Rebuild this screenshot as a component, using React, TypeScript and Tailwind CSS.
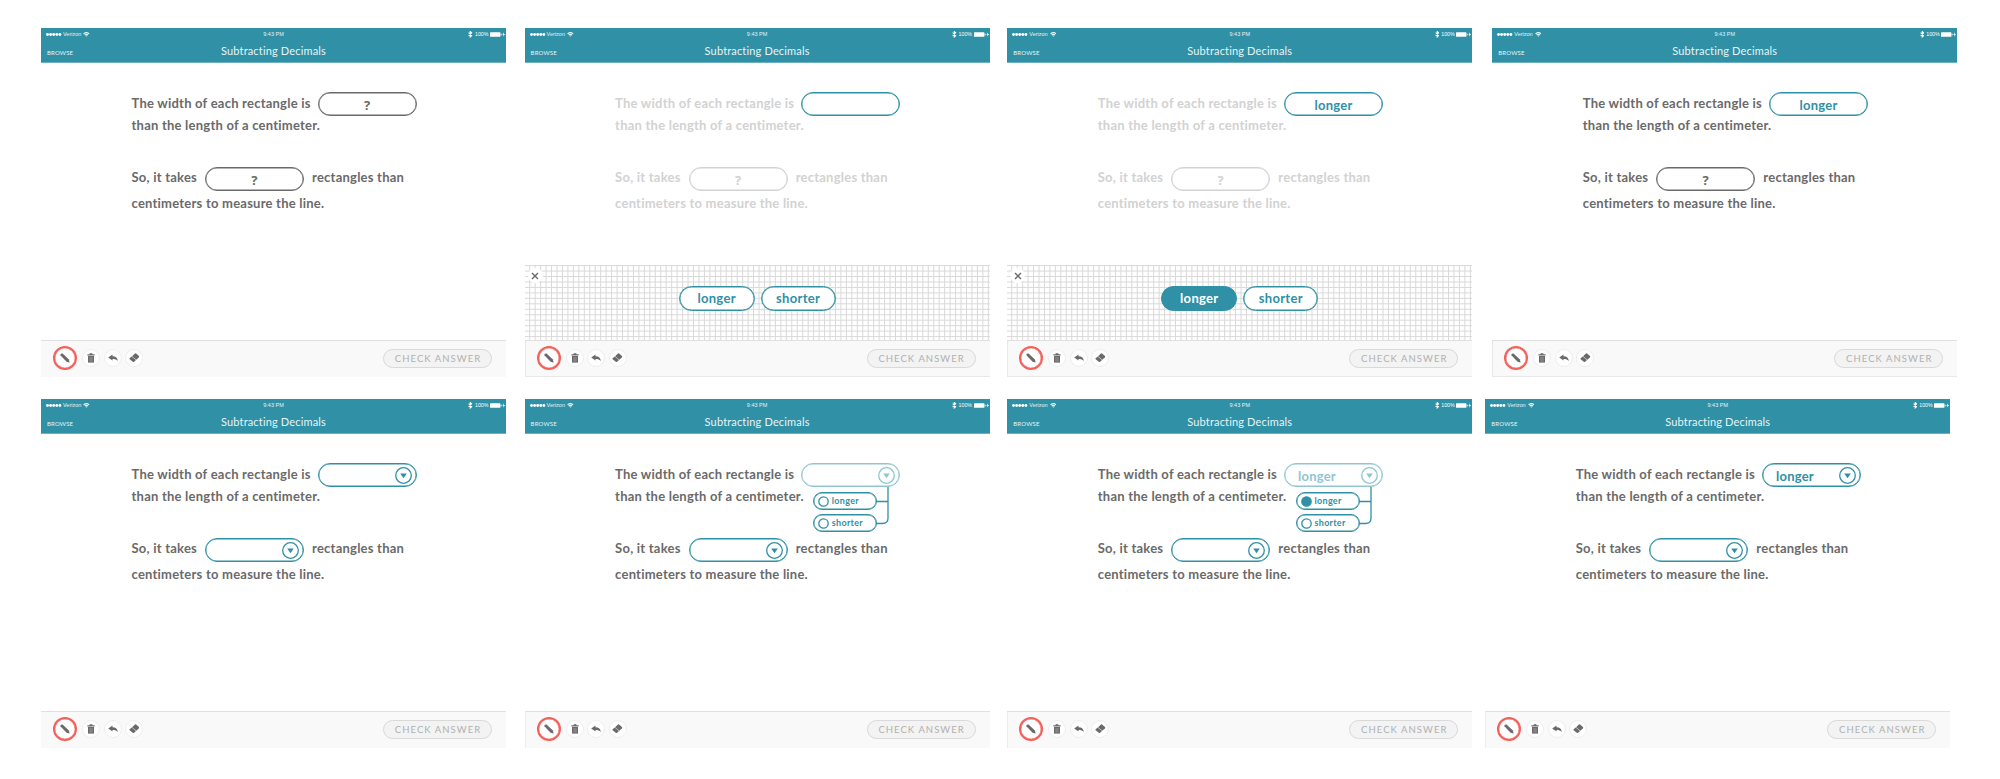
import type { ReactNode } from "react";

type Tone = "dark" | "faded" | "teal" | "tealLight";

const toneText: Record<Tone, string> = {
  dark: "text-[#6a6a6a]",
  faded: "text-[#d2d2d2]",
  teal: "text-[#3090a5]",
  tealLight: "text-[#90c6d2]",
};

/* ---------- status bar and header ---------- */

function WifiIcon() {
  return (
    <svg viewBox="0 0 12 9" className="h-[5px] w-[6.7px]" fill="none" stroke="currentColor">
      <path d="M1 3.2C4 .6 8 .6 11 3.2" strokeWidth="2.1" />
      <path d="M3 5.4C5 3.8 7 3.8 9 5.4" strokeWidth="1.9" />
      <path d="M6 8.6 4.4 6.8Q6 5.6 7.6 6.8Z" fill="currentColor" stroke="none" />
    </svg>
  );
}

function BluetoothIcon() {
  return (
    <svg viewBox="0 0 8 12" className="h-[6.5px] w-[4.5px]" fill="none" stroke="currentColor" strokeWidth="2">
      <path d="M1 3.2 6.6 8.6 4 11V1l2.6 2.4L1 8.8" />
    </svg>
  );
}

function BatteryIcon() {
  return (
    <svg viewBox="0 0 15 5" className="h-[5px] w-[15px]" fill="currentColor">
      <rect x="0" y="0.2" width="10.4" height="4.6" rx="0.6" />
      <rect x="10.6" y="1.6" width="1" height="1.8" rx="0.4" />
      <path d="M13.9 .3 12.4 2.8h1.1L13.2 4.7 15 2.1h-1.2z" />
    </svg>
  );
}

function Header() {
  return (
    <header className="h-[35px] border-b border-[#6bafc0] bg-[#3090a5] text-[#e6f4f7]">
      <div className="grid h-3 grid-cols-3 items-center pt-px font-['Liberation_Sans',sans-serif] text-[5.5px] leading-[11px]">
        <div className="flex items-center pl-[5px]">
          <svg viewBox="0 0 16 3" className="h-[3px] w-[16px] text-white" fill="currentColor">
            {[1.5, 4.6, 7.7, 10.8, 13.9].map((x) => (
              <circle key={x} cx={x} cy="1.5" r="1.45" />
            ))}
          </svg>
          <span className="ml-[1px]">Verizon</span>
          <span className="ml-[2px]">
            <WifiIcon />
          </span>
        </div>
        <span className="text-center">9:43 PM</span>
        <div className="flex items-center justify-end pr-[1px] text-white">
          <BluetoothIcon />
          <span className="mr-[1.5px] ml-[2px] text-[5.3px]">100%</span>
          <BatteryIcon />
        </div>
      </div>
      <div className="grid grid-cols-3 items-baseline leading-[22px]">
        <span className="pl-[6px] text-[6px] tracking-[0.17px]">BROWSE</span>
        <h1 className="text-center text-[11px] tracking-[0.16px] whitespace-nowrap">Subtracting Decimals</h1>
      </div>
    </header>
  );
}

/* ---------- blanks ---------- */

const ring = "border border-current shadow-[inset_0_0_0_0.4px_currentColor]";

function Blank({ tone, children }: { tone: Tone; children?: ReactNode }) {
  return (
    <span
      className={`flex h-6 w-[99px] shrink-0 items-center justify-center rounded-full pt-px leading-[22px] ${ring} ${toneText[tone]}`}
    >
      {children}
    </span>
  );
}

function Unknown() {
  return <span className="font-['Open_Sans',sans-serif]">?</span>;
}

function Chevron() {
  return (
    <svg viewBox="0 0 17 17" className="size-[17px]">
      <circle cx="8.5" cy="8.5" r="7.8" fill="none" stroke="currentColor" strokeWidth="1.3" />
      <path d="M5.2 6.5h6.6l-3.3 4.8z" fill="currentColor" />
    </svg>
  );
}

function Option({ label, checked }: { label: string; checked?: boolean }) {
  return (
    <div className={`flex h-[18px] w-16 items-center rounded-full bg-white pl-[4px] ${ring}`}>
      <svg viewBox="0 0 11 11" className="size-[11px]" stroke="currentColor" strokeWidth="1.3">
        <circle cx="5.5" cy="5.5" r="4.7" fill={checked ? "currentColor" : "none"} />
      </svg>
      <span className="ml-[3px] text-[9px] leading-[16px] tracking-[0.3px]">{label}</span>
    </div>
  );
}

function Menu({ picked }: { picked?: string }) {
  return (
    <div className="absolute top-6 left-[11.5px] w-20 text-[#3090a5]">
      <svg
        viewBox="0 0 13 38"
        className="absolute top-0 left-[63px] h-[38px] w-[13px]"
        fill="none"
        stroke="currentColor"
        strokeWidth="1.3"
      >
        <path d="M12 0V31Q12 36.5 6.5 36.5H0M0 14.5H12" />
      </svg>
      <div className="flex flex-col gap-[4px] pt-[5px]">
        <Option label="longer" checked={picked === "longer"} />
        <Option label="shorter" checked={picked === "shorter"} />
      </div>
    </div>
  );
}

function Select({ tone, value, open }: { tone: Tone; value?: string; open?: boolean }) {
  return (
    <span className="relative shrink-0">
      <span
        className={`flex h-6 w-[99px] items-center justify-between rounded-full pr-[4px] pl-[13px] leading-[22px] ${ring} ${toneText[tone]}`}
      >
        <span className="pt-px">{value}</span>
        <Chevron />
      </span>
      {open && <Menu picked={value} />}
    </span>
  );
}

function Sentences({ tone, first, second }: { tone: Tone; first: ReactNode; second: ReactNode }) {
  return (
    <main
      className={`pt-[29px] pl-[90.5px] text-[13px] font-bold tracking-[0.23px] whitespace-nowrap ${toneText[tone]}`}
    >
      <div className="flex h-6">
        <span className="-mt-px mr-[7px] leading-[24px]">The width of each rectangle is</span>
        {first}
      </div>
      <p className="leading-[18px]">than the length of a centimeter.</p>
      <div className="mt-[33px] flex h-6">
        <span className="-mt-[2px] mr-[8px] leading-[24px]">So, it takes</span>
        {second}
        <span className="-mt-[2px] ml-[8px] leading-[24px]">rectangles than</span>
      </div>
      <p className="mt-[2px] leading-[20px]">centimeters to measure the line.</p>
    </main>
  );
}

/* ---------- answer tray ---------- */

function GridPaper() {
  const rows = Array.from({ length: 14 }, (_, i) => 0.6 + i * 5.46);
  const cols = Array.from({ length: 86 }, (_, i) => 4.7 + i * 5.46 - 5.46);
  return (
    <svg viewBox="0 0 465 75" className="absolute inset-0 h-[75px] w-full" stroke="#d9d9d9" strokeWidth="1">
      {rows.map((y) => (
        <line key={y} x1="0" x2="465" y1={y} y2={y} />
      ))}
      {cols.map((x) => (
        <line key={x} x1={x} x2={x} y1="0" y2="75" />
      ))}
    </svg>
  );
}

function Tray({ picked }: { picked?: string }) {
  const idle = "bg-white text-[#3090a5]";
  const active = "bg-[#3090a5] text-white";
  return (
    <section className="relative h-[75px]">
      <GridPaper />
      <button className="absolute top-[3px] left-[3px] flex size-[15px] items-center justify-center rounded-full bg-white">
        <svg viewBox="0 0 8 8" className="size-[8px]" stroke="#6a6a6a" strokeWidth="1.4">
          <path d="M1 1 7 7M7 1 1 7" />
        </svg>
      </button>
      <div className="relative flex justify-center gap-[6px] pt-[21px] text-[13px] font-bold tracking-[0.3px]">
        <button
          className={`h-[25px] w-[76px] rounded-full border border-[#3090a5] shadow-[inset_0_0_0_0.5px_#3090a5] ${picked === "longer" ? active : idle}`}
        >
          longer
        </button>
        <button
          className={`h-[25px] w-[75px] rounded-full border border-[#3090a5] shadow-[inset_0_0_0_0.5px_#3090a5] ${picked === "shorter" ? active : idle}`}
        >
          shorter
        </button>
      </div>
    </section>
  );
}

/* ---------- toolbar ---------- */

function PencilIcon() {
  return (
    <svg viewBox="0 0 9 9" className="size-[10px] shrink-0" fill="#6a6a6a">
      <path d="M.4 2Q.1 1.2 .8.7T2.3.4L8 5.8 8.7 8.6 5.9 7.9Z" />
    </svg>
  );
}

function TrashIcon() {
  return (
    <svg viewBox="0 0 8 10" className="h-[10px] w-[8px]" fill="#6a6a6a">
      <path d="M.4 1.2h2.2V.3h2.8v.9h2.2v1.4H.4z" />
      <path d="M1 3h6v6.6H1z" />
      <path d="M2.9 3.8v4.9M4 3.8v4.9M5.1 3.8v4.9" stroke="#b9b9b9" strokeWidth=".4" />
    </svg>
  );
}

function UndoIcon() {
  return (
    <svg viewBox="0 0 10 8" className="h-[8px] w-[10px]" fill="#6a6a6a">
      <path d="M.2 3.5 4.5.4v1.8C7.9 2.3 9.6 4 9.8 7 8.4 5.4 6.9 4.9 4.5 4.9v1.7z" />
    </svg>
  );
}

function EraserIcon() {
  return (
    <svg viewBox="0 0 10 9" className="h-[9.5px] w-[10.5px] shrink-0" fill="#6a6a6a">
      <path d="M5.4.6Q6.1 0 6.8.5L9.5 2.8Q10 3.4 9.5 4L7 6.4 2.9 3z" />
      <path d="M2.6 3.3 6.7 6.7 4.9 8.4Q4.3 8.9 3.6 8.4L.6 5.9Q.1 5.4.6 4.9z" />
    </svg>
  );
}

function Tool({ children }: { children: ReactNode }) {
  return (
    <button className="flex size-[18px] items-center justify-center rounded-full border border-[#eeeeee] bg-white">
      {children}
    </button>
  );
}

function Toolbar({ edge }: { edge: string }) {
  return (
    <footer className={`flex h-[37px] items-center border-t border-[#e0e0e0] bg-[#f9f9f9] pr-[14px] pb-[2px] ${edge}`}>
      <button className="ml-[12px] flex size-6 items-center justify-center rounded-full border-2 border-[#f4605a] bg-white shadow-[inset_0_0_0_0.3px_#f4605a]">
        <PencilIcon />
      </button>
      <div className="ml-[5px] flex items-center gap-[3.5px]">
        <Tool>
          <TrashIcon />
        </Tool>
        <Tool>
          <UndoIcon />
        </Tool>
        <Tool>
          <EraserIcon />
        </Tool>
      </div>
      <button className="ml-auto h-[19px] w-[109px] rounded-full border border-[#d9d9d9] bg-[#f3f3f3] pl-px text-[9.5px] leading-[17px] tracking-[1.05px] whitespace-nowrap text-[#b0b0b0]">
        CHECK ANSWER
      </button>
    </footer>
  );
}

/* ---------- screens ---------- */

function Screen({ gap, edge = "", tray, children }: { gap: string; edge?: string; tray?: ReactNode; children: ReactNode }) {
  return (
    <article className={`flex h-[349px] w-[465px] shrink-0 flex-col bg-white ${gap}`}>
      <Header />
      {children}
      <div className="mt-auto">
        {tray}
        <Toolbar edge={edge} />
      </div>
    </article>
  );
}

const sideEdge = "shadow-[inset_1px_0_0_#ececec]";
const boxEdge = "shadow-[inset_1px_-1px_0_#e8e8e8]";

export default function App() {
  return (
    <div className="flex h-[779px] w-[2000px] flex-col gap-[22px] overflow-hidden bg-white pt-[28px] font-['Lato',sans-serif]">
      <div className="flex">
        <Screen gap="ml-[41px]">
          <Sentences
            tone="dark"
            first={
              <Blank tone="dark">
                <Unknown />
              </Blank>
            }
            second={
              <Blank tone="dark">
                <Unknown />
              </Blank>
            }
          />
        </Screen>
        <Screen gap="ml-[18.6px]" edge={boxEdge} tray={<Tray />}>
          <Sentences
            tone="faded"
            first={<Blank tone="teal" />}
            second={
              <Blank tone="faded">
                <Unknown />
              </Blank>
            }
          />
        </Screen>
        <Screen gap="ml-[17.7px]" edge={boxEdge} tray={<Tray picked="longer" />}>
          <Sentences
            tone="faded"
            first={<Blank tone="teal">longer</Blank>}
            second={
              <Blank tone="faded">
                <Unknown />
              </Blank>
            }
          />
        </Screen>
        <Screen gap="ml-[20px]" edge={boxEdge}>
          <Sentences
            tone="dark"
            first={<Blank tone="teal">longer</Blank>}
            second={
              <Blank tone="dark">
                <Unknown />
              </Blank>
            }
          />
        </Screen>
      </div>
      <div className="flex">
        <Screen gap="ml-[41px]">
          <Sentences tone="dark" first={<Select tone="teal" />} second={<Select tone="teal" />} />
        </Screen>
        <Screen gap="ml-[18.6px]" edge={sideEdge}>
          <Sentences tone="dark" first={<Select tone="tealLight" open />} second={<Select tone="teal" />} />
        </Screen>
        <Screen gap="ml-[17.7px]" edge={sideEdge}>
          <Sentences
            tone="dark"
            first={<Select tone="tealLight" value="longer" open />}
            second={<Select tone="teal" />}
          />
        </Screen>
        <Screen gap="ml-[13px]" edge={sideEdge}>
          <Sentences tone="dark" first={<Select tone="teal" value="longer" />} second={<Select tone="teal" />} />
        </Screen>
      </div>
    </div>
  );
}
